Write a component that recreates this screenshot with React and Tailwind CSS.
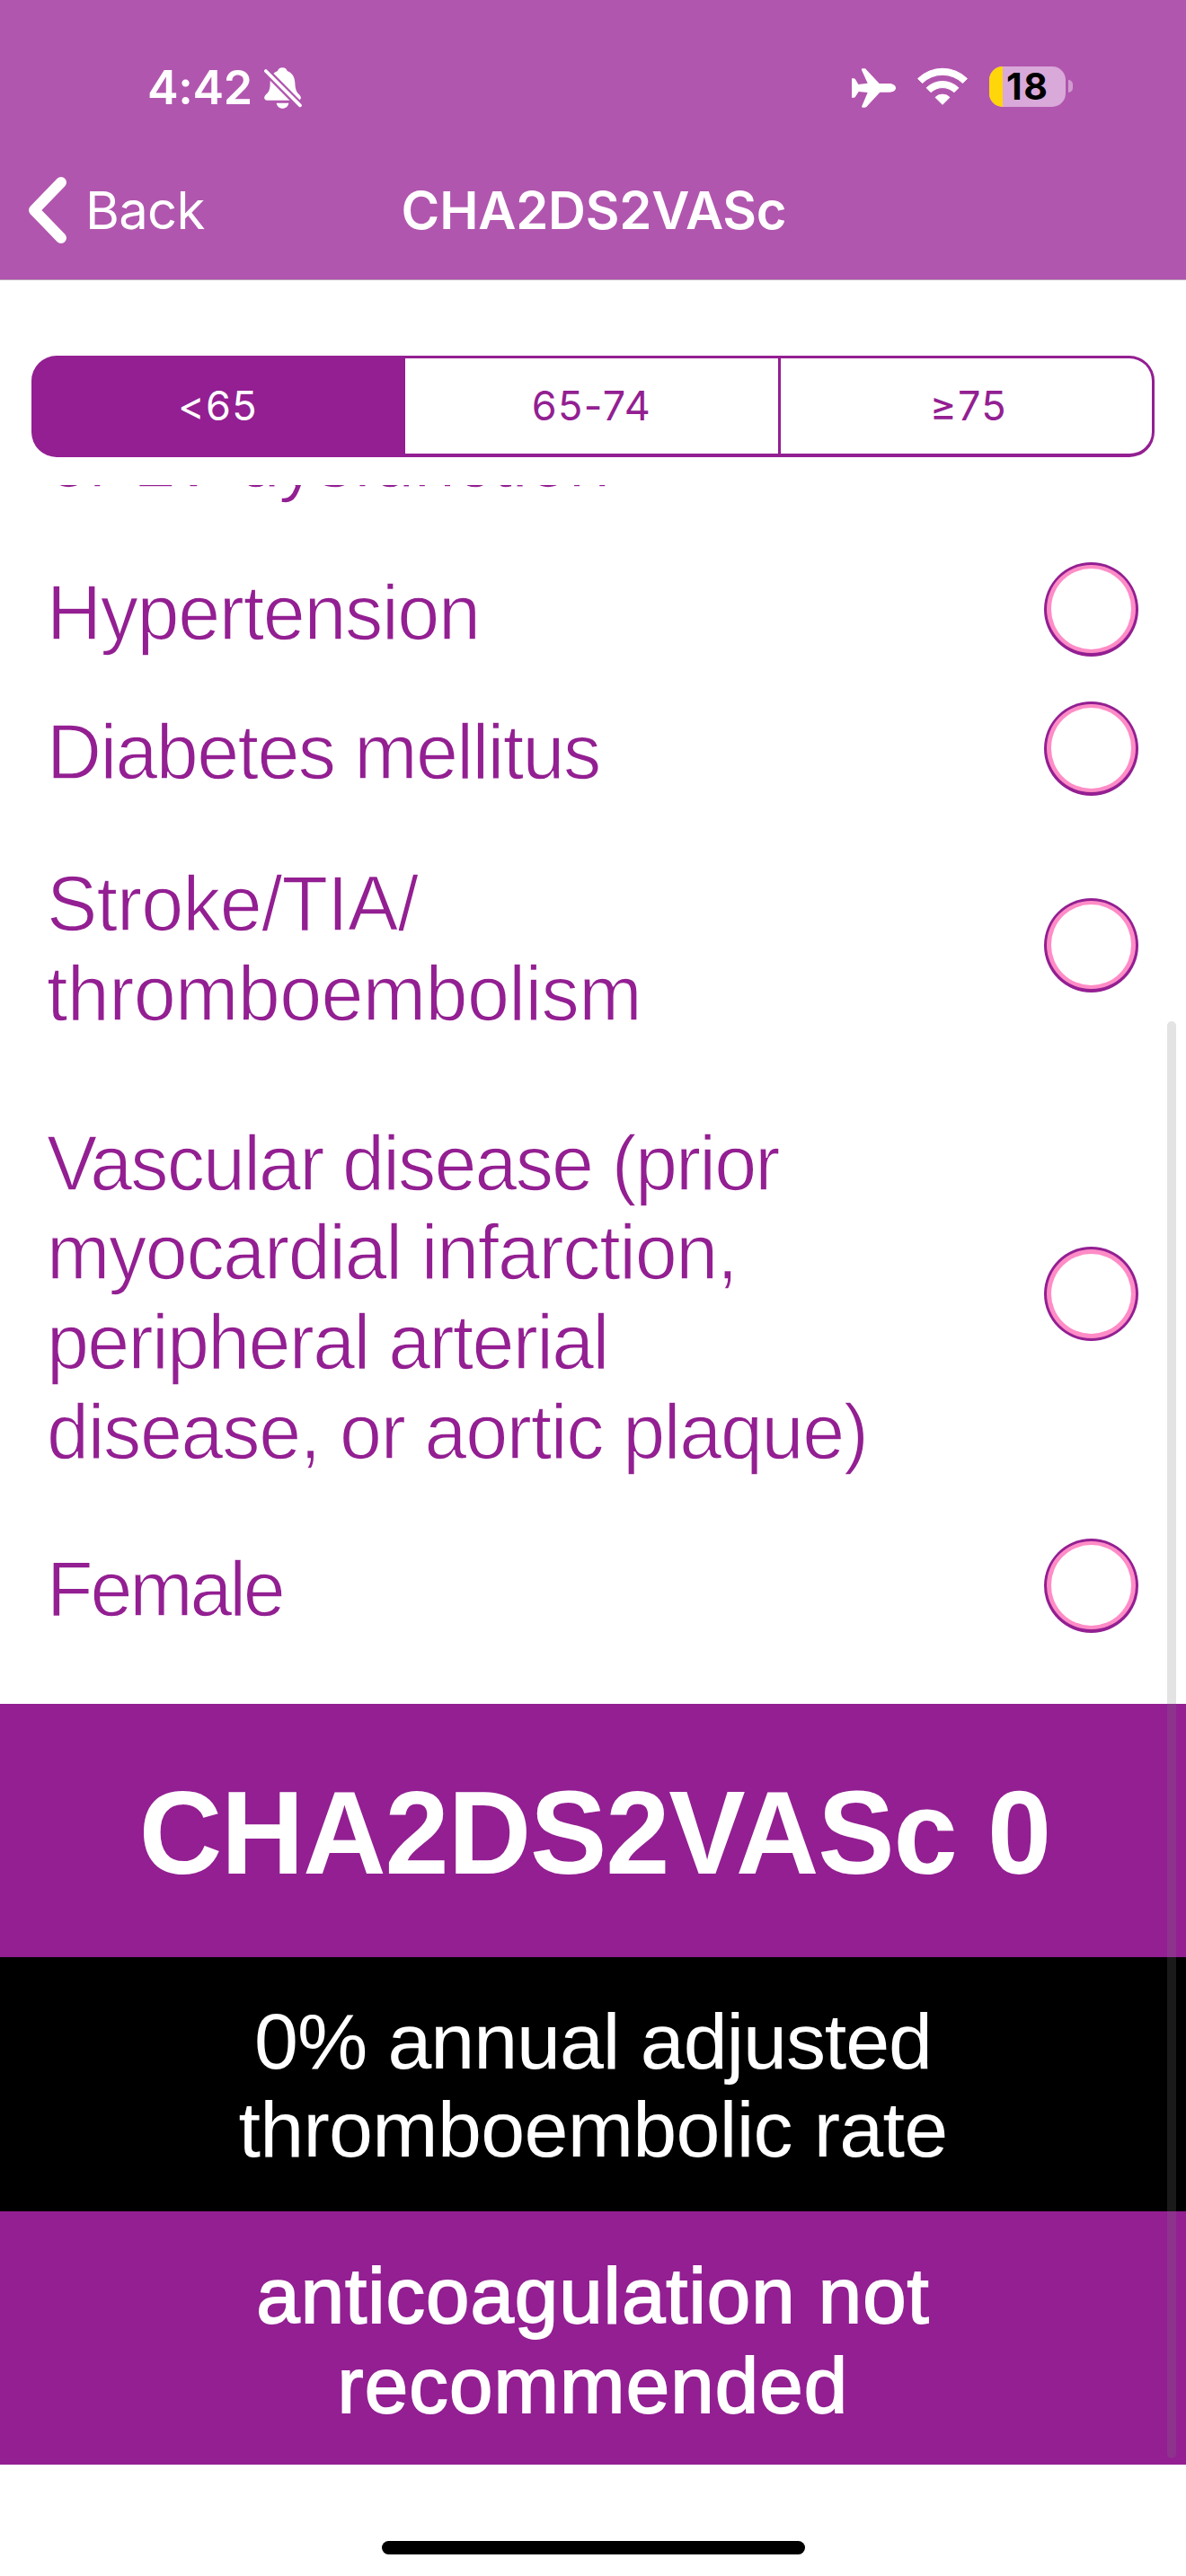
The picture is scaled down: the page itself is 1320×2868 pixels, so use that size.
function BellSlashIcon() {
  return (
    <svg viewBox="0 0 126 138" className="h-[46px] w-[42px]" fill="#fff">
      <mask id="bell-gap">
        <rect width="126" height="138" fill="#fff" />
        <path d="M-10 -4L136 144" stroke="#000" strokeWidth="25" />
      </mask>
      <g mask="url(#bell-gap)">
        <path d="M61 1C52 1 47 6 45 12C28 18 20 33 20 52C20 78 14 84 4 93C-3 101 1 110 10 110H113C122 110 126 101 119 93C108 83 104 75 103 52C102 33 94 18 77 12C75 6 70 1 61 1Z" />
      </g>
      <path d="M41 119H82C80 130 72 137 61 137C51 137 43 130 41 119Z" />
      <path d="M5.500 12L120 127" stroke="#fff" strokeWidth="11" strokeLinecap="round" />
    </svg>
  )
}

function PlaneIcon() {
  return (
    <svg viewBox="0 0 147 132" className="h-[44px] w-[49px]" fill="#fff">
      <path d="M147 66C147 74 138 80 126 80H94L51 127C49 130 46 131 43 131H37C34 131 32 129 34 126L53 81L23 78L12 95C10 98 8 98 6 98H0V34H6C8 34 10 34 12 37L22 54L53 50L33 6C32 3 33 1 37 1H42C45 1 47 2 49 5L92 51H126C138 51 147 58 147 66Z" />
    </svg>
  )
}

function WifiIcon() {
  return (
    <svg viewBox="0 0 172 127" className="h-[42px] w-[58px]" fill="#fff" stroke="#fff" strokeWidth="3" strokeLinejoin="round">
      <path d="M3 38A118 118 0 0 1 169 38L154 53A97 97 0 0 0 18 53Z" />
      <path d="M32 69A77 77 0 0 1 140 69L125 84A56 56 0 0 0 47 84Z" />
      <path d="M62 101A34 34 0 0 1 110 101L86 125Z" />
    </svg>
  )
}

function Battery() {
  return (
    <div className="flex items-center gap-[3px]">
      <div className="flex h-[45px] w-[85px] items-center overflow-hidden rounded-[15px] bg-[#d9a9d9]">
        <div className="h-full w-[15px] bg-[#ffd60a]" />
        <span className="pl-[4px] text-[41px] leading-none font-bold tracking-[1.500px] text-black">18</span>
      </div>
      <div className="h-[14px] w-[5px] rounded-r-[5px] bg-[#d09cd0]" />
    </div>
  )
}

function Header() {
  return (
    <header className="h-[312px] border-b border-[#b9a3b9] bg-[#b156ae] pt-[60px] text-white">
      <div className="flex h-[76px] items-center justify-between pr-[126px] pl-[164px]">
        <div className="flex items-center gap-[12px]">
          <span className="w-[118px] text-[52px] leading-none font-semibold tracking-[-0.400px]">4:42</span>
          <BellSlashIcon />
        </div>
        <div className="flex items-center gap-[23px]">
          <PlaneIcon />
          <div className="-mt-[4px] flex items-center gap-[23px]">
            <WifiIcon />
            <Battery />
          </div>
        </div>
      </div>
      <div className="mt-[21px] grid h-[154px] grid-cols-[1fr_auto_1fr] items-center text-[58px] leading-none">
        <div className="flex items-center pl-[31px]">
          <svg viewBox="0 0 43 74" className="h-[74px] w-[43px]" fill="none" stroke="#fff" strokeWidth="12" strokeLinecap="round" strokeLinejoin="round">
            <path d="M37 6L7 37L37 68" />
          </svg>
          <span className="pl-[21px] tracking-[-0.700px]">Back</span>
        </div>
        <h1 className="pl-[2px] font-semibold tracking-[-0.200px]">CHA2DS2VASc</h1>
      </div>
    </header>
  )
}

function AgeTabs() {
  return (
    <div className="mx-[35px] mt-[84px] grid h-[113px] grid-cols-[413px_418px_1fr] overflow-hidden rounded-[28px] border-[3px] border-b-[4px] border-[#931f92] bg-[#931f92] text-center text-[45px] leading-[106px] tracking-[1.300px] text-[#931f92]">
      <div className="pr-[4px] text-white">&lt;65</div>
      <div className="border-r-[3px] border-[#931f92] bg-white">65-74</div>
      <div className="bg-white pl-[5px]">≥75</div>
    </div>
  )
}

const rows = [
  { height: 'h-[156px]', lines: [['Hypertension', 'tracking-[-1.400px]']] },
  { height: 'h-[154px]', lines: [['Diabetes mellitus', 'tracking-[-1.700px]']] },
  { height: 'h-[284px]', lines: [['Stroke/TIA/', 'tracking-[-0.900px]'], ['thromboembolism', 'tracking-[-0.660px]']] },
  {
    height: 'h-[493px]',
    lines: [
      ['Vascular disease (prior', 'tracking-[-1.950px]'],
      ['myocardial infarction,', 'tracking-[-1.430px]'],
      ['peripheral arterial', 'tracking-[-1.800px]'],
      ['disease, or aortic plaque)', 'tracking-[-1.400px]'],
    ],
  },
  { height: 'h-[156px]', lines: [['Female', 'tracking-[-3.300px]']] },
]

function Label({ lines }) {
  return (
    <div className="origin-left scale-x-[0.96] pt-[7px] text-[88px] leading-[99.700px] whitespace-nowrap text-[#931f92] [-webkit-text-stroke:1.400px_white]">
      {lines.map(([text, tracking]) => (
        <div key={text} className={tracking}>{text}</div>
      ))}
    </div>
  )
}

function Radio() {
  return (
    <div className="size-[105px] rounded-full bg-[#931f92] p-[3.400px]">
      <div className="size-full rounded-full bg-[#ff8cc6] p-[4.600px]">
        <div className="size-full rounded-full bg-white" />
      </div>
    </div>
  )
}

export default function App() {
  return (
    <div className="flex h-[2868px] w-[1320px] flex-col overflow-hidden bg-white font-['Inter',sans-serif]">
      <Header />
      <AgeTabs />
      <main className="relative mt-[31px] h-[2204px] overflow-hidden font-['Liberation_Sans',sans-serif]">
        <div className="flex h-[22px] items-end pl-[53px]">
          <Label lines={[['or LV dysfunction', 'tracking-[-1.300px]']]} />
        </div>
        <div className="mt-[38px] mb-[54px]">
          {rows.map((row) => (
            <div key={row.lines[0][0]} className={`flex items-center justify-between pr-[53px] pl-[52px] ${row.height}`}>
              <Label lines={row.lines} />
              <Radio />
            </div>
          ))}
        </div>
        <div className="flex h-[282px] items-center justify-center bg-[#931f92] pt-[6px] pl-[3px] text-[132px] leading-none font-bold text-white">
          <div className="scale-x-[0.97] tracking-[-1.200px] whitespace-nowrap">CHA2DS2VASc 0</div>
        </div>
        <div className="flex h-[283px] flex-col items-center justify-center bg-black pt-[2px] text-[88px] leading-[98px] text-white">
          <div className="tracking-[-1.060px]">0% annual adjusted</div>
          <div className="tracking-[-0.680px]">thromboembolic rate</div>
        </div>
        <div className="flex h-[282px] flex-col items-center justify-center bg-[#931f92] pt-[5px] text-[87px] leading-[100px] text-white [-webkit-text-stroke:1.800px_white]">
          <div className="tracking-[1px]">anticoagulation not</div>
          <div className="tracking-[1.150px]">recommended</div>
        </div>
        <div className="absolute top-[597px] right-[11px] h-[1600px] w-[10px] rounded-full bg-[#7a7a7a]/21" />
      </main>
      <div className="mx-auto mt-[85px] h-[15px] w-[471px] rounded-full bg-black" />
    </div>
  )
}
